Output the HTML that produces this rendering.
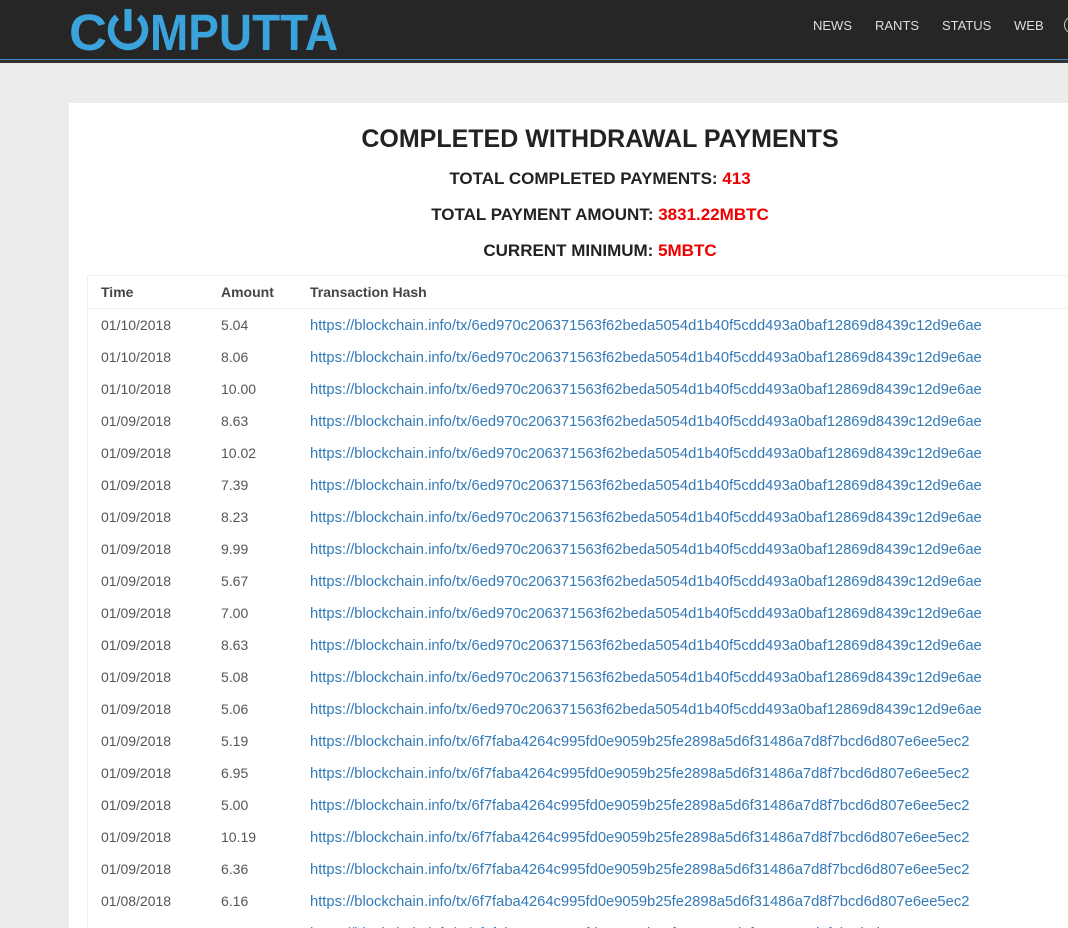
<!DOCTYPE html>
<html><head><meta charset="utf-8"><style>
html,body{margin:0;width:1068px;height:928px;overflow:hidden}
body{background:#ececec;font-family:"Liberation Sans",Arial,sans-serif;position:relative}
.hdr{position:absolute;left:0;top:0;width:1068px;height:59px;background:#262626;border-bottom:1px solid #3a86c4}
.hdr2{position:absolute;left:0;top:60px;width:1068px;height:3px;background:#333}
.nav{position:absolute;top:18px;font-size:13px;color:#ddd}
.card{position:absolute;left:69px;top:103px;width:999px;height:825px;background:#fff;overflow:hidden}
h1{position:absolute;left:0;width:1062px;top:22px;margin:0;text-align:center;font-size:25px;font-weight:bold;color:#222}
.st{position:absolute;left:0;width:1062px;text-align:center;font-size:17px;font-weight:bold;color:#222}
.st span{color:#e00}
.tbl{position:absolute;left:18px;top:172px;width:1000px;height:800px;border:1px solid #eee}
.row{position:absolute;left:0;height:32px;line-height:32px;font-size:14px;color:#555;width:1000px}
.row div{position:absolute}
.th{font-weight:bold;color:#444;border-bottom:1px solid #eee}
a{color:#337ab7;text-decoration:none;font-size:14.75px}
</style></head><body>
<div class="hdr"></div><div class="hdr2"></div>
<svg style="position:absolute;left:66px;top:6px" width="280" height="52">
<g fill="#3ba3dc" font-family="Liberation Sans,Arial,sans-serif" font-weight="bold" font-size="51">
<text x="3" y="44" textLength="38" lengthAdjust="spacingAndGlyphs">C</text>
<text x="84" y="44" textLength="188" lengthAdjust="spacingAndGlyphs">MPUTTA</text></g>
<path d="M51 11 A17 17 0 1 0 73 11" fill="none" stroke="#3ba3dc" stroke-width="6.5"/>
<rect x="58.5" y="3" width="7" height="22" fill="#3ba3dc"/>
</svg>
<div class="nav" style="left:813px">NEWS</div>
<div class="nav" style="left:875px">RANTS</div>
<div class="nav" style="left:942px">STATUS</div>
<div class="nav" style="left:1014px">WEB</div>
<div style="position:absolute;left:1064px;top:17px;width:12px;height:14px;border:1.5px solid #ccc;border-radius:50%"></div>
<div class="card">
<h1>COMPLETED WITHDRAWAL PAYMENTS</h1>
<div class="st" style="top:66px">TOTAL COMPLETED PAYMENTS: <span>413</span></div>
<div class="st" style="top:102px">TOTAL PAYMENT AMOUNT: <span>3831.22MBTC</span></div>
<div class="st" style="top:138px">CURRENT MINIMUM: <span>5MBTC</span></div>
<div class="tbl">
<div class="row th" style="top:0"><div style="left:13px">Time</div><div style="left:133px">Amount</div><div style="left:222px">Transaction Hash</div></div>
<div id="rows"></div>
</div></div>
<script>
var d=[["01/10/2018","5.04",0],["01/10/2018","8.06",0],["01/10/2018","10.00",0],["01/09/2018","8.63",0],["01/09/2018","10.02",0],["01/09/2018","7.39",0],["01/09/2018","8.23",0],["01/09/2018","9.99",0],["01/09/2018","5.67",0],["01/09/2018","7.00",0],["01/09/2018","8.63",0],["01/09/2018","5.08",0],["01/09/2018","5.06",0],["01/09/2018","5.19",1],["01/09/2018","6.95",1],["01/09/2018","5.00",1],["01/09/2018","10.19",1],["01/09/2018","6.36",1],["01/08/2018","6.16",1],["","",1]];
var h=["https://blockchain.info/tx/6ed970c206371563f62beda5054d1b40f5cdd493a0baf12869d8439c12d9e6ae","https://blockchain.info/tx/6f7faba4264c995fd0e9059b25fe2898a5d6f31486a7d8f7bcd6d807e6ee5ec2"];
var s="";d.forEach(function(r,i){s+='<div class="row" style="top:'+(33+i*32)+'px"><div style="left:13px">'+r[0]+'</div><div style="left:133px">'+r[1]+'</div><div style="left:222px"><a>'+h[r[2]]+'</a></div></div>'});
document.getElementById("rows").innerHTML=s;
</script>
</body></html>
